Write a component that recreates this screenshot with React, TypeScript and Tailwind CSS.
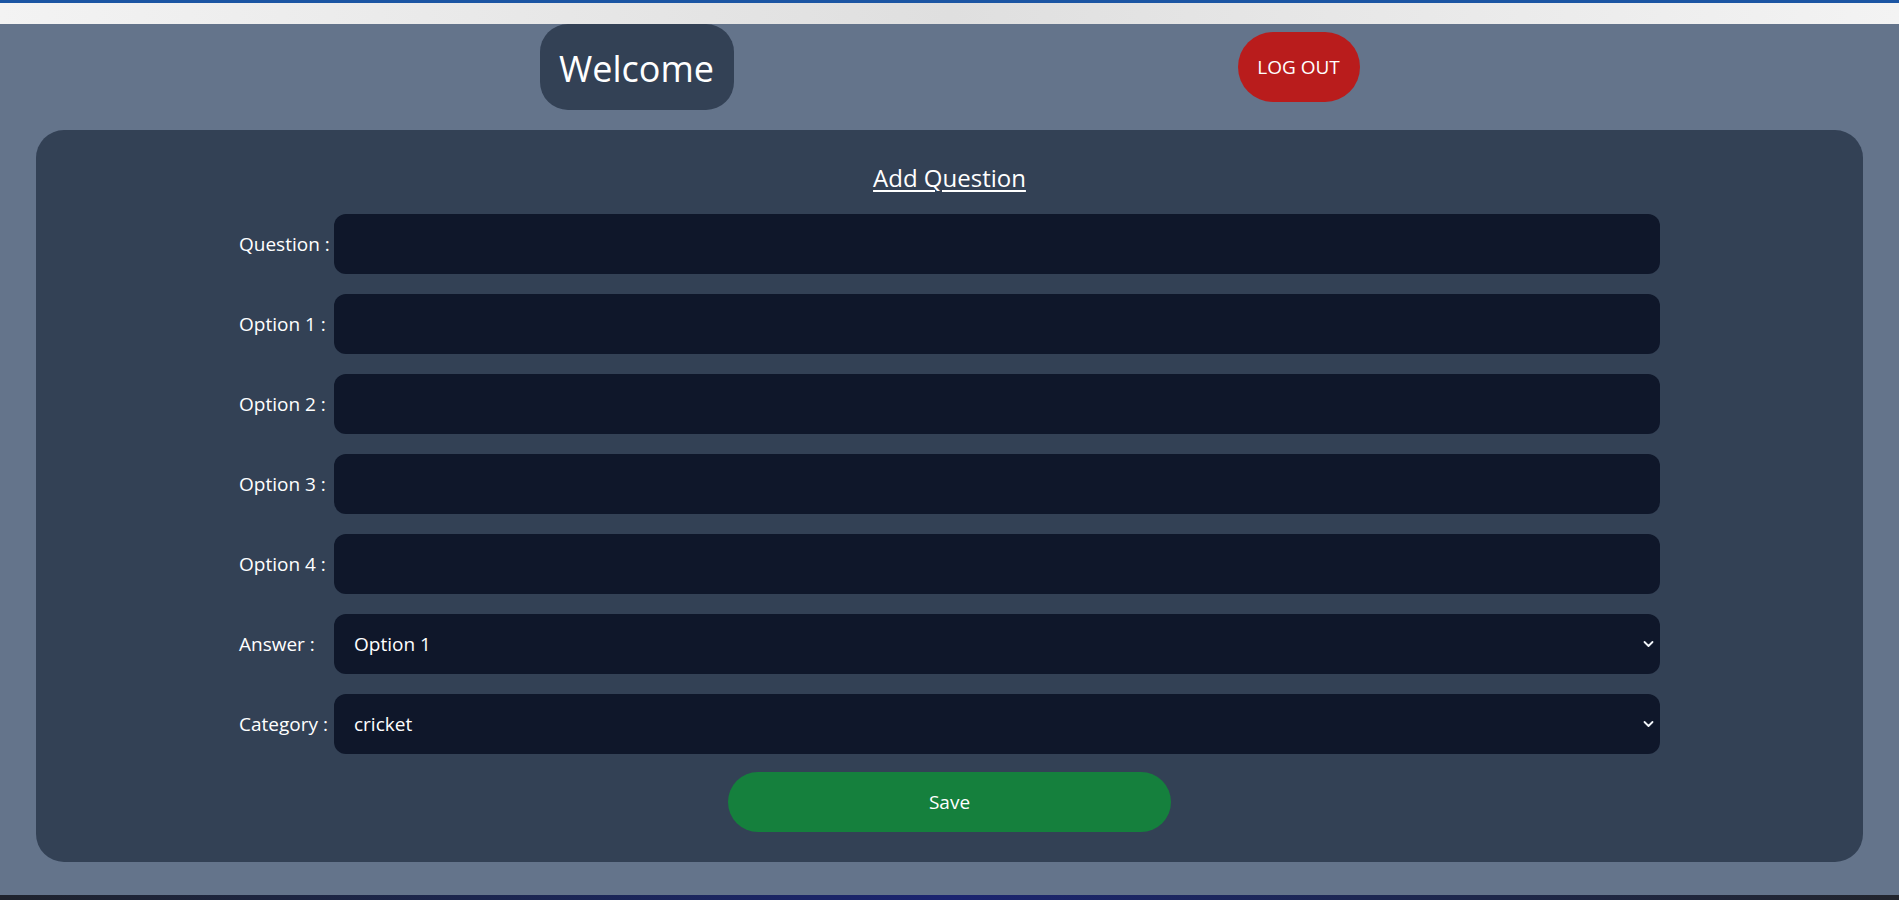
import React from "react";

const font = { fontFamily: '"Open Sans", "Noto Sans", sans-serif' };

function Chevron() {
  return (
    <svg
      className="pointer-events-none absolute right-[6px] top-1/2 -translate-y-1/2"
      width="11"
      height="8"
      viewBox="0 0 11 8"
      fill="none"
    >
      <path d="M1.5 2 L5.5 6 L9.5 2" stroke="#f1f5f9" strokeWidth="1.8" strokeLinecap="round" strokeLinejoin="round" />
    </svg>
  );
}

function TextRow({ label }: { label: string }) {
  return (
    <>
      <label className="flex items-center text-[19px] text-white whitespace-nowrap">{label}</label>
      <input
        type="text"
        className="h-[60px] w-full rounded-xl bg-[#0f172a] px-5 text-[19px] text-white outline-none"
      />
    </>
  );
}

function SelectRow({ label, options }: { label: string; options: string[] }) {
  return (
    <>
      <label className="flex items-center text-[19px] text-white whitespace-nowrap">{label}</label>
      <div className="relative">
        <select
          className="h-[60px] w-full appearance-none rounded-xl bg-[#0f172a] pl-5 pr-8 text-[19px] text-white outline-none"
          style={font}
          defaultValue={options[0]}
        >
          {options.map((o) => (
            <option key={o} value={o}>
              {o}
            </option>
          ))}
        </select>
        <Chevron />
      </div>
    </>
  );
}

export default function App() {
  return (
    <div className="flex h-[900px] flex-col overflow-hidden bg-[#64748b]" style={font}>
      <div className="h-[3px] bg-[#1b55a3]" />
      <div className="h-[21px] bg-gradient-to-r from-[#f3f3f3] via-[#dfdfdf] to-[#f3f3f3]" />

      <header className="flex h-[86px] items-center justify-center gap-[504px]">
        <div className="flex h-[86px] w-[194px] items-center justify-center rounded-[28px] bg-[#334155] pt-[3px] text-[36px] leading-[40px] text-white">
          Welcome
        </div>
        <button className="flex h-[70px] w-[122px] items-center justify-center rounded-full bg-[#b91c1c] pt-[1px] text-[19px] text-white">
          LOG OUT
        </button>
      </header>

      <main className="mx-[36px] mt-[20px] flex h-[732px] flex-col items-center rounded-[28px] bg-[#334155] pt-8">
        <h2 className="text-[24px] leading-[32px] text-white underline underline-offset-[3px] decoration-[2px]">
          Add Question
        </h2>
        <form className="mt-5 flex w-[1421px] flex-col items-center" onSubmit={(e) => e.preventDefault()}>
          <div className="grid w-full grid-cols-[95px_1fr] gap-y-5">
            <TextRow label="Question :" />
            <TextRow label="Option 1 :" />
            <TextRow label="Option 2 :" />
            <TextRow label="Option 3 :" />
            <TextRow label="Option 4 :" />
            <SelectRow label="Answer :" options={["Option 1", "Option 2", "Option 3", "Option 4"]} />
            <SelectRow label="Category :" options={["cricket", "football", "general"]} />
          </div>
          <button
            type="submit"
            className="mt-[18px] h-[60px] w-[443px] rounded-full bg-[#15803d] text-[19px] text-white"
          >
            Save
          </button>
        </form>
      </main>

      <div className="flex-1" />
      <div className="h-[5px] bg-gradient-to-r from-[#1f232d] via-[#1b2470] to-[#22252d]" />
    </div>
  );
}
